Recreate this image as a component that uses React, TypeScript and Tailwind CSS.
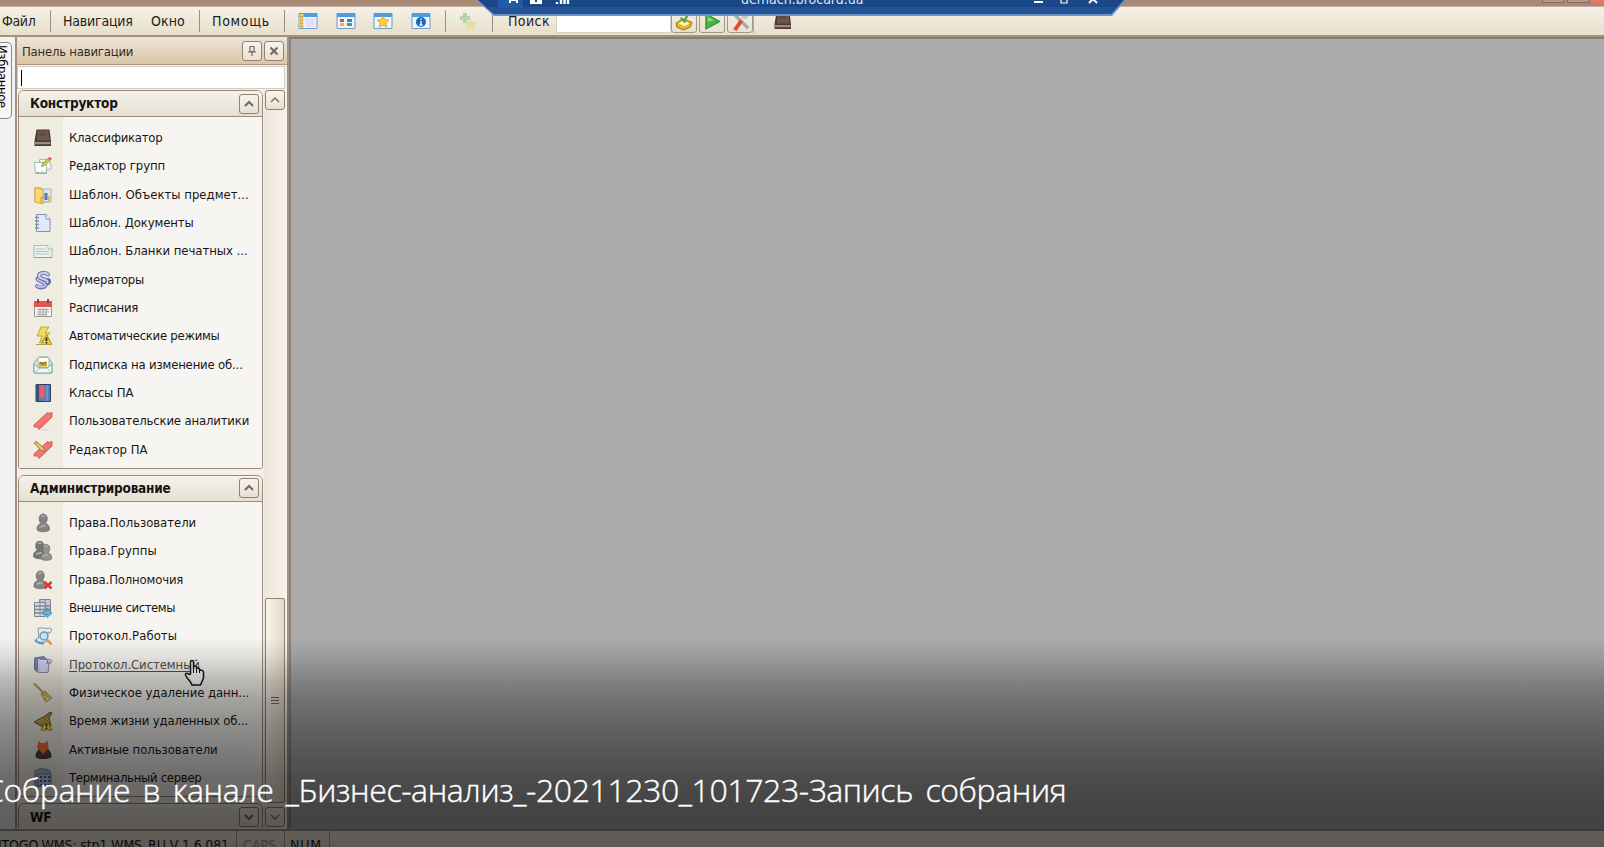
import type { ReactNode } from "react";

const Svg = ({ children, size = 20 }: { children: ReactNode; size?: number }) => (
  <svg width={size} height={size} viewBox="0 0 20 20" fill="none" className="block shrink-0">
    {children}
  </svg>
);

const BookIcon = () => (
  <Svg>
    <path d="M3.500 1.500h13l1.500 12v4.500H1.500v-5z" fill="#4f3a32" />
    <path d="M5 2.500h10.500l1 10H3.800z" fill="#6c574d" />
    <path d="M2 14h15.500v2.200H2z" fill="#9b8c80" />
    <path d="M6.500 5h7M6.300 7h7.500" stroke="#594238" />
  </Svg>
);
const GroupEditIcon = () => (
  <Svg>
    <path d="M6.500 3.500h10l2 9-4 1.500h-8z" fill="#eff6f0" stroke="#a3bfb4" />
    <path d="M1.500 6.500h11l1 3v8h-11z" fill="#f8fcfa" stroke="#9db9b2" />
    <path d="m3 17.500 2-1.500 2 1.500 2-1.500 2 1.500 2-1.500" stroke="#7ea49a" />
    <path d="m8.500 10.500 1-3 6-5.500 2 2-6 5.500z" fill="#d8c84c" stroke="#83833d" strokeWidth=".7" />
    <path d="m15 2.500 1.500-1.500 2.500 1.500-2 2z" fill="#dc5050" />
  </Svg>
);
const FolderIcon = () => (
  <Svg>
    <path d="M2 3h6l2 2h6v12H2z" fill="#e9b94d" stroke="#bc8c2e" strokeWidth=".7" />
    <path d="M10 4h8v13h-8z" fill="#d8e9f5" stroke="#82a2b9" strokeWidth=".7" />
    <path d="M11.500 8h3v7h-3z" fill="#397cc2" />
    <path d="M15 11h2v5h-2z" fill="#d6bf47" />
    <path d="m2 2.500 8 2v14.500l-8-2z" fill="#fbd876" stroke="#c8983b" strokeWidth=".7" />
    <path d="M8 18.500v-6l5-1" stroke="#c8983b" />
  </Svg>
);
const NotebookIcon = () => (
  <Svg>
    <path d="M3.500 1.500H13l4 4.500v12.500H3.500z" fill="#dfe9fa" stroke="#7e91b1" />
    <path d="M13 1.500V6h4" fill="#fff" stroke="#7e91b1" />
    <path d="M2 4.500h4M2 8h4M2 11.500h4M2 15h4" stroke="#8491a8" strokeWidth="1.400" />
  </Svg>
);
const BlankIcon = () => (
  <Svg>
    <path d="M1 4.500h14l4 3v9H1z" fill="#e9f2ed" stroke="#a6bdb5" />
    <path d="M15 4v4h4" fill="#fff" stroke="#a6bdb5" />
    <path d="M3 8h9M3 10.500h13M3 13h13" stroke="#a5c5c9" />
    <path d="M1 16.500h18" stroke="#8ba59c" />
  </Svg>
);
const NumeratorIcon = () => (
  <Svg>
    <path d="M15 4.500c-2-2.500-9-2-9 1.500s8.500 2.500 8.500 6c0 1-1 1.500-2 1.500" stroke="#626aa8" strokeWidth="4" strokeLinecap="round" />
    <path d="M15.500 10c1.500 2 0 3-1 3.500M4.500 8.500C4 11.500 12 11 12.500 15c-.5 3-6 3-8.500 1" stroke="#626aa8" strokeWidth="4" strokeLinecap="round" />
    <path d="M15 4.500c-2-2.500-9-2-9 1.500s8.500 2.500 8.500 6" stroke="#cdd1f2" strokeWidth="2.200" strokeLinecap="round" />
    <path d="M4.500 9c0 2.500 8 2.500 8 6-.5 2.500-6 2.500-8.500 1" stroke="#b9beea" strokeWidth="2.200" strokeLinecap="round" />
  </Svg>
);
const CalendarIcon = () => (
  <Svg>
    <path d="M1.500 3.500h17v15h-17z" fill="#f5f5f2" stroke="#999" />
    <path d="M1 3h18v6H1z" fill="#e65450" />
    <path d="M5 1v4M15 1v4" stroke="#8c3030" strokeWidth="1.800" />
    <path d="M4 11.500h12M4 14h12M4 16.500h10M7 10v8M10 10v8M13 10v8" stroke="#a5aaa4" />
  </Svg>
);
const LightningIcon = () => (
  <Svg>
    <path d="M8 1h8l-4 6h5L6.500 17l2.500-7H4z" fill="#eddb62" stroke="#b9a73b" />
    <path d="M13.500 8.500 19 18.500H8z" fill="#e4cb34" stroke="#a48f24" />
    <path d="M3 18.500h16" stroke="#b3a14a" />
    <path d="M13.500 11.500v3.500M13.500 16v1.500" stroke="#252315" strokeWidth="1.600" />
  </Svg>
);
const MailIcon = () => (
  <Svg>
    <path d="m1 8 5-6h9l4 6v10H1z" fill="#d5e9e9" stroke="#83a6a6" />
    <path d="M5 2.500h11v10H5z" fill="#f9fcf9" stroke="#a1b7ae" />
    <path d="M6 7h8v4.500H6z" fill="#c3a92c" />
    <path d="m7 7 3 2 3-2" stroke="#665c28" />
    <path d="m1 9 5 4h8l5-4v9H1z" fill="#eff8f6" stroke="#83a6a6" />
    <path d="m1 18 6-5M19 18l-6-5" stroke="#a8c3c0" />
  </Svg>
);
const ClassesIcon = () => (
  <Svg>
    <path d="M3 1.500h14.500v17H3z" fill="#507fbd" stroke="#273f6a" />
    <path d="M3 1.500h3v17H3z" fill="#364f7d" />
    <path d="M6.500 2h5v14L9 14l-2.500 2z" fill="#ef5d60" />
    <path d="M14 2v16" stroke="#87aedb" />
  </Svg>
);
const RibbonShape = () => (
  <path d="m14.500 1.500 1.500 1 3-1v4.500L6 18.500l-1.500-2.500-3.500 0v-2z" fill="#f27473" stroke="#c04c4b" strokeWidth=".8" />
);
const RibbonIcon = () => (
  <Svg>
    <RibbonShape />
    <path d="M8 19h8" stroke="#d9d4cb" />
  </Svg>
);
const RibbonEditIcon = () => (
  <Svg>
    <RibbonShape />
    <path d="m1 3 2-2 8 7 .5 3.500-3.500-1z" fill="#e6c457" stroke="#8c7139" strokeWidth=".8" />
    <path d="m1 3 2-2 2 2-2 2z" fill="#d7a08b" />
  </Svg>
);
const Person = ({ fill = "#858483" }: { fill?: string }) => (
  <>
    <path d="M6.200 5.500c0-6 8-6 8 0 0 2-.8 3.500-1.700 4.500.5 1 3.800 1.600 3.800 5v2c-2 2.300-10 2.300-12.200 0v-2c0-3.200 3-3.800 3.600-5-.9-1-1.500-2.500-1.500-4.500z" fill={fill} stroke="#636261" strokeWidth=".7" />
    <path d="M8.500 3.800c1-1.300 2.500-1.300 3.500 0M6.500 14.500c2-1.500 4-2 6-1.500" stroke="#b4b3b1" strokeWidth="1.400" />
  </>
);
const UserIcon = () => (
  <Svg>
    <Person />
  </Svg>
);
const GroupIcon = () => (
  <Svg>
    <g transform="translate(-3.500 -1)">
      <Person fill="#767574" />
    </g>
    <g transform="translate(4 2.500) scale(.9)">
      <Person fill="#92918f" />
    </g>
  </Svg>
);
const UserDenyIcon = () => (
  <Svg>
    <g transform="translate(-3 0)">
      <Person />
    </g>
    <path d="m11.500 12 7 6.500m0-6.500-7 6.500" stroke="#d63d30" strokeWidth="2.600" />
  </Svg>
);
const ServerGridIcon = () => (
  <Svg>
    <path d="M6.500 1.500h11v15h-11z" fill="#c1c5cf" stroke="#7f8490" />
    <path d="M1.500 4.500h11v14h-11z" fill="#d8dbe2" stroke="#7f8490" />
    <path d="M2 8h15M2 11.500h15M2 15h11" stroke="#7b8496" strokeWidth="1.300" />
    <path d="M7 2v16M12 2v16" stroke="#8791a4" />
    <path d="M10 13h4v-3l5 5-5 4.500v-3h-4z" fill="#68b2e9" stroke="#347ab0" strokeWidth=".7" />
  </Svg>
);
const LogSearchIcon = () => (
  <Svg>
    <path d="M5 2.500c3-2 8 1 12-.5 2 1 2 3 0 5l-2-1-1 9c-3 3-8 0-12 1l2-4h2z" fill="#e7eaee" stroke="#8b929b" />
    <circle cx="11" cy="10" r="4" fill="#c0e2f7" stroke="#6791b2" strokeWidth="1.300" />
    <path d="m14 13.500 4.500 5" stroke="#d59b47" strokeWidth="2.400" />
    <path d="m2 14 4 3 5 .5" stroke="#549dcc" strokeWidth="2" />
  </Svg>
);
const SystemLogIcon = () => (
  <Svg>
    <path d="M1.500 3 11 1.500l3 3v13H5l-3.500-3z" fill="#7c80b6" stroke="#6a6ea3" />
    <path d="M6 4.500h8c2-.5 4 0 5 2L16 9l-1 8.500H6.500z" fill="#d2d4ef" stroke="#8488ad" />
    <path d="M14 4.500c1 1 1 2.500-.5 3.500h4" stroke="#686b91" />
    <path d="M6 4v13.500" stroke="#dddff2" strokeWidth="1.500" />
  </Svg>
);
const BroomIcon = () => (
  <Svg>
    <path d="m1.500 1 9 9" stroke="#b39b6a" strokeWidth="2.200" strokeLinecap="round" />
    <path d="m8 11 4-3 7 7-6 4z" fill="#ead684" stroke="#a98f4a" />
    <path d="m9 10 3 3m-1-4 5 6m-3-1-2 3" stroke="#9a7540" />
  </Svg>
);
const LifetimeIcon = () => (
  <Svg>
    <path d="m12 5 5-4 2 1-3 5 2 8-5 3L1 11z" fill="#b28d43" stroke="#76592c" />
    <path d="m12 6 4 4M3 11l7-3m-4 5 6-4" stroke="#dfbe6f" />
    <path d="M13.500 9 19 19H8z" fill="#ffe53a" stroke="#a28c1f" />
    <path d="M13.500 12v3.500M13.500 16.500V18" stroke="#242112" strokeWidth="1.600" />
  </Svg>
);
const ActiveUserIcon = () => (
  <Svg>
    <path d="m6 2 2 2h4l2-2v5l1 3c2 1 3 4 3 7-4 2-12 2-15 0 0-3 1-6 3-7l-1-3z" fill="#514340" stroke="#37302d" />
    <path d="m5 1 3 2h4l3-2 .5 8-5.500 5-5-5z" fill="#ff6a30" />
    <path d="m8 8 2 4 2-4z" fill="#d79929" />
  </Svg>
);
const TerminalIcon = () => (
  <Svg>
    <path d="M2 3c4-3 11-3 15 0v14c-4 2-11 2-15 0z" fill="#a9b4c2" stroke="#6e7f95" />
    <path d="M5 6h13v12H5z" fill="#b9cdea" stroke="#607e9f" />
    <path d="M7 8h2v2H7zM11 8h2v2h-2zM15 8h2v2h-2zM7 12h2v2H7zM11 12h2v2h-2zM15 12h2v2h-2zM7 16h2v1H7zM11 16h2v1h-2zM15 16h2v1h-2z" fill="#315d91" />
  </Svg>
);

type Item = { label: string; icon: ReactNode; hover?: boolean; tracking: string };

const designer: Item[] = [
  { label: "Классификатор", icon: <BookIcon />, tracking: "tracking-[-0.25px]" },
  { label: "Редактор групп", icon: <GroupEditIcon />, tracking: "tracking-[-0.1px]" },
  { label: "Шаблон. Объекты предмет...", icon: <FolderIcon />, tracking: "tracking-[0px]" },
  { label: "Шаблон. Документы", icon: <NotebookIcon />, tracking: "tracking-[-0.12px]" },
  { label: "Шаблон. Бланки печатных ...", icon: <BlankIcon />, tracking: "tracking-[-0.04px]" },
  { label: "Нумераторы", icon: <NumeratorIcon />, tracking: "tracking-[-0.18px]" },
  { label: "Расписания", icon: <CalendarIcon />, tracking: "tracking-[-0.27px]" },
  { label: "Автоматические режимы", icon: <LightningIcon />, tracking: "tracking-[-0.27px]" },
  { label: "Подписка на изменение об...", icon: <MailIcon />, tracking: "tracking-[-0.18px]" },
  { label: "Классы ПА", icon: <ClassesIcon />, tracking: "tracking-[-0.14px]" },
  { label: "Пользовательские аналитики", icon: <RibbonIcon />, tracking: "tracking-[-0.16px]" },
  { label: "Редактор ПА", icon: <RibbonEditIcon />, tracking: "tracking-[0px]" },
];

const admin: Item[] = [
  { label: "Права.Пользователи", icon: <UserIcon />, tracking: "tracking-[-0.05px]" },
  { label: "Права.Группы", icon: <GroupIcon />, tracking: "tracking-[0.04px]" },
  { label: "Права.Полномочия", icon: <UserDenyIcon />, tracking: "tracking-[-0.17px]" },
  { label: "Внешние системы", icon: <ServerGridIcon />, tracking: "tracking-[-0.41px]" },
  { label: "Протокол.Работы", icon: <LogSearchIcon />, tracking: "tracking-[0.04px]" },
  { label: "Протокол.Системный", icon: <SystemLogIcon />, hover: true, tracking: "tracking-[-0.08px]" },
  { label: "Физическое удаление данн...", icon: <BroomIcon />, tracking: "tracking-[-0.06px]" },
  { label: "Время жизни удаленных об...", icon: <LifetimeIcon />, tracking: "tracking-[-0.15px]" },
  { label: "Активные пользователи", icon: <ActiveUserIcon />, tracking: "tracking-[-0.06px]" },
  { label: "Терминальный сервер", icon: <TerminalIcon />, tracking: "tracking-[-0.3px]" },
];

const Chevron = ({ down = false, thin = false }: { down?: boolean; thin?: boolean }) => (
  <svg width="12" height="8" viewBox="0 0 12 8" fill="none">
    <path d={down ? "m2 2 4 4 4-4" : "m2 6 4-4 4 4"} stroke="#76695f" strokeWidth={thin ? 1.3 : 2} />
  </svg>
);

const Button = ({ children }: { children: ReactNode }) => (
  <div className="flex size-5 shrink-0 items-center justify-center rounded-[3px] border border-[#947f70] bg-linear-to-b from-[#f8f5ee] to-[#e8e0d1]">
    {children}
  </div>
);

const GroupHeader = ({ title, down }: { title: string; down?: boolean }) => (
  <div className="flex h-[26px] shrink-0 items-center justify-between border-b border-[#9d8a7c] bg-linear-to-b from-[#f5f2ec] to-[#e6dfd2] pr-[3px] pl-[11px]">
    <span className="text-[13.5px] font-bold tracking-[-0.2px] text-[#171412]">{title}</span>
    <Button>
      <Chevron down={down} />
    </Button>
  </div>
);

const Group = ({ title, items }: { title: string; items: Item[] }) => (
  <section className="shrink-0 overflow-hidden rounded-t-[6px] rounded-b-[3px] border-[1.5px] border-[#9d8a7c] bg-[#f6f4f0]">
    <GroupHeader title={title} />
    <ul className="bg-linear-to-r from-[#efece1] from-[44px] to-[#f7f5f1] to-[44px] pt-[7px] pb-[4px]">
      {items.map((item) => (
        <li key={item.label} className="flex h-[28.33px] items-center gap-[16px] pl-[14px]">
          {item.icon}
          <span
            className={`text-[13px] leading-4 whitespace-nowrap ${item.tracking} ${item.hover ? "text-[#57524e] underline underline-offset-2" : "text-[#191715]"}`}
          >
            {item.label}
          </span>
        </li>
      ))}
    </ul>
  </section>
);

const WindowIcon = ({ kind }: { kind: "list" | "apps" | "star" | "info" }) => (
  <Svg>
    <path d="M1 2.500h18v15H1z" fill="#eef5fd" stroke="#6f9bc9" />
    <path d="M1 2h18v4H1z" fill="#4b9fe0" />
    {kind === "list" && (
      <>
        <path d="M1.500 3h4v14h-4z" fill="#f2cf73" />
        <path d="M2 6h3M2 9h3M2 12h3M2 15h3" stroke="#bc8f31" />
        <path d="M7 7h10v9H7z" fill="#e0e1f6" />
      </>
    )}
    {kind === "apps" && (
      <>
        <path d="M4 8h4v3H4z" fill="#db493e" />
        <path d="M11 8h5v3h-5z" fill="#3781cf" />
        <path d="M4 12h4v3H4z" fill="#edb53b" />
        <path d="M11 12h5v3h-5z" fill="#4da156" />
      </>
    )}
    {kind === "star" && (
      <path d="m10 5 1.800 3.500 4 .7-3 2.800.8 4-3.600-1.900L6.400 16l.8-4-3-2.800 4-.7z" fill="#ffcf42" stroke="#d49a29" strokeWidth=".8" />
    )}
    {kind === "info" && (
      <>
        <circle cx="10" cy="11" r="5" fill="#1867bd" />
        <path d="M10 7.500v1.500M10 10v4M8.500 14h3" stroke="#fff" strokeWidth="1.400" />
      </>
    )}
  </Svg>
);

const Divider = () => <div className="h-[22px] w-px shrink-0 bg-[#988f84]" />;

const ToolButton = ({ children }: { children: ReactNode }) => (
  <div className="flex h-[24px] w-[26px] shrink-0 items-end justify-center rounded-[3px] border border-[#a3978b] bg-linear-to-b from-[#f4f0e7] to-[#e9e1d0] pb-px">
    {children}
  </div>
);

const Toolbar = () => (
  <header className="flex h-[28px] shrink-0 items-center bg-linear-to-b from-[#f5f1e8] to-[#e7dfca] text-[14px] text-[#211d1a]">
    <span className="w-[50px] pl-[2px] tracking-[-0.35px]">Файл</span>
    <Divider />
    <span className="w-[87px] pl-[12px] tracking-[-0.2px]">Навигация</span>
    <span className="w-[57px] pl-[13px] tracking-[0.1px]">Окно</span>
    <div className="w-[4px]" />
    <Divider />
    <span className="w-[84px] pl-[12px] tracking-[0.7px]">Помощь</span>
    <Divider />
    <div className="flex w-[160px] gap-[17.5px] pl-[13px]">
      <WindowIcon kind="list" />
      <WindowIcon kind="apps" />
      <WindowIcon kind="star" />
      <WindowIcon kind="info" />
    </div>
    <Divider />
    <div className="w-[46px] pl-[12px]">
      <Svg>
        <path d="M5 2h4v3h3v4H9v3H5V9H2V5h3z" fill="#b6d3a8" />
        <path d="m13 8 2 3 4 1-3 3 1 4-4-2-4 2 1-4-3-3 4-1z" fill="#e9df9c" />
      </Svg>
    </div>
    <Divider />
    <span className="w-[63px] pl-[15px] tracking-[0.4px]">Поиск</span>
    <div className="h-[24px] w-[115px] border border-[#d9d2c6] bg-white" />
    <div className="flex gap-[2px] border-r border-[#b6ada0]">
      <ToolButton>
        <Svg size={19}>
          <path d="m1 12 7-5 10 4-2 5-7 3-7-3z" fill="#e4b928" stroke="#8c751d" />
          <path d="m4 12 5-3 6 3-5 3z" fill="#fff6b7" />
          <path d="m14 1-4 9-4-4" stroke="#54a443" strokeWidth="2.400" />
        </Svg>
      </ToolButton>
      <ToolButton>
        <Svg size={19}>
          <path d="m3 2 15 8-15 8z" fill="#46b63e" stroke="#277f26" />
          <path d="m5 5 7 4-7 1z" fill="#8ad77e" />
        </Svg>
      </ToolButton>
      <ToolButton>
        <Svg size={19}>
          <path d="m3 2 13 13m-2-2 4 4" stroke="#a8a9aa" strokeWidth="3.500" />
          <path d="m13 2 5-1v5l-4 2-3-3z" fill="#c5c6c8" />
          <path d="m11 9-7 10" stroke="#e34b32" strokeWidth="4" />
        </Svg>
      </ToolButton>
    </div>
    <div className="pl-[19px]">
      <BookIcon />
    </div>
  </header>
);

const RemoteBar = () => (
  <div className="absolute top-0 left-[476px] h-[16px] w-[650px]">
    <svg width="650" height="16" viewBox="0 0 650 16" className="block">
      <path d="M0 0h650l-14 16H18z" fill="#6b96c7" />
      <path d="M2 0h646l-13 14H18z" fill="#1a4787" />
      <path d="M10 7h631l-6 7H18z" fill="#235295" />
      <path d="M22 0h25v8H22z" fill="#215ba6" />
      <path d="M34 0v3M41 0v3M35 0h5" stroke="#fff" strokeWidth="2" />
      <path d="M54 0h12v4H54z" fill="#fff" />
      <path d="M60 0v2" stroke="#1a4787" strokeWidth="2" />
      <path d="M81 4V2M85 4V0M88.500 4V0M92 4V0" stroke="#fff" strokeWidth="2.400" />
      <path d="M558 2h9" stroke="#fff" strokeWidth="2" />
      <path d="M585 0v3h6V0" stroke="#fff" strokeWidth="1.200" fill="none" />
      <path d="m613 3 4-4 4 4" stroke="#fff" strokeWidth="2" fill="none" />
    </svg>
    <div className="absolute top-[-9px] left-[265px] text-[14px] leading-4 whitespace-nowrap text-[#d9e4f3]">demach.brocard.ua</div>
  </div>
);

const HandCursor = () => (
  <svg width="22" height="28" viewBox="0 0 22 28" className="absolute top-[659px] left-[184px]">
    <path
      d="M6.500 15V3c0-2 3-2 3 0v7-2c0-1.500 3-1.500 3 0v2c0-1.500 3-1.500 3 0v2c0-1.500 4-1 4 1v6l-3 7H8c-1-4-5-6-6.500-10-.5-2 2-2.500 3.500-.5z"
      fill="#fff"
      stroke="#171717"
      strokeWidth="1.500"
    />
    <path d="M9.500 10v4M12.500 10v4M15.500 11v3" stroke="#171717" />
  </svg>
);

export default function App() {
  return (
    <div className="relative flex h-[847px] w-[1604px] flex-col overflow-hidden bg-[#ababab] font-['DejaVu_Sans_Condensed','DejaVu_Sans',sans-serif]">
      <div className="flex h-[7px] shrink-0 items-start justify-end gap-[3px] border-b border-[#c9aea0] bg-[#a98a76]">
        <div className="h-[3px] w-[22px] border-x border-b border-[#86695b] bg-[#b59b8a]" />
        <div className="h-[3px] w-[22px] border-x border-b border-[#86695b] bg-[#b59b8a]" />
        <div className="h-[3px] w-[12px] bg-[#ec7568]" />
      </div>
      <Toolbar />
      <div className="h-[2px] shrink-0 bg-[#a4917e]" />
      <div className="flex h-[792px] shrink-0">
        <div className="h-full w-[15px] shrink-0 bg-[#f2f2f2] pt-[5px]">
          <div className="h-[77px] w-[12px] overflow-hidden rounded-r-[5px] border border-l-0 border-[#8e8881] bg-[#f7f6f4]">
            <div className="-ml-[5px] w-[14px] pt-[2px] text-[13px] leading-[14px] tracking-[-0.4px] [writing-mode:vertical-rl]">Избранное</div>
          </div>
        </div>
        <aside className="flex w-[274px] shrink-0 flex-col border-x-2 border-[#a49182] bg-[#f4efe7]">
          <div className="flex h-[28px] shrink-0 items-center border-b border-[#aa9785] bg-linear-to-b from-[#ece5da] to-[#d9c6a6] pr-[3px] pl-[5px]">
            <span className="flex-1 pt-[2px] text-[13px] tracking-[-0.22px] text-[#352c25]">Панель навигации</span>
            <div className="flex gap-[2px]">
              <Button>
                <svg width="12" height="12" viewBox="0 0 12 12" fill="none">
                  <path d="M4 1.500h4v5H4zM2 7h8M6 7v4" stroke="#74675e" strokeWidth="1.200" />
                </svg>
              </Button>
              <Button>
                <svg width="10" height="10" viewBox="0 0 10 10">
                  <path d="m1.500 1.500 7 7m0-7-7 7" stroke="#74675e" strokeWidth="2" />
                </svg>
              </Button>
            </div>
          </div>
          <div className="mt-[1px] mr-[2px] flex h-[23px] shrink-0 items-center border border-[#d5cbc0] bg-white pl-[3px]">
            <div className="h-4 w-px bg-black" />
          </div>
          <div className="flex min-h-0 flex-1 pt-px">
            <div className="flex w-[247px] shrink-0 flex-col gap-[6px] overflow-hidden bg-[#f5efea] pr-[1px] pl-[1px]">
              <Group title="Конструктор" items={designer} />
              <Group title="Администрирование" items={admin} />
              <div className="h-[25px] shrink-0 overflow-hidden rounded-t-[6px] border border-b-0 border-[#9d8a7c]">
                <GroupHeader title="WF" down />
              </div>
            </div>
            <div className="flex w-[23px] flex-col bg-linear-to-r from-[#ece5da] to-[#faf3ec] pb-[2px] pl-[1px]">
              <Button>
                <Chevron thin />
              </Button>
              <div className="flex-1" />
              <div className="mb-[4px] flex h-[205px] w-5 items-center justify-center rounded-[2px] border border-[#947f70] bg-linear-to-r from-[#f8f3eb] to-[#e6dbc9]">
                <div className="flex flex-col gap-[2px]">
                  <div className="h-px w-2 bg-[#76695f]" />
                  <div className="h-px w-2 bg-[#76695f]" />
                  <div className="h-px w-2 bg-[#76695f]" />
                </div>
              </div>
              <Button>
                <Chevron down thin />
              </Button>
            </div>
          </div>
        </aside>
        <main className="flex-1 border-t-2 border-l-2 border-t-[#877c79] border-l-[#858585] bg-[#ababab]" />
      </div>
      <footer className="flex h-[18px] shrink-0 border-t-2 border-[#a29588] bg-linear-to-b from-[#f8f0e5] to-[#f0e4d8] text-[14px] leading-[28px] whitespace-nowrap text-[#201d1a]">
        <div className="w-[237px] border-r border-[#afa296]">
          <span className="-ml-[2px] tracking-[-0.15px]">ITOGO.WMS: stp1.WMS_RU V 1.6.081</span>
        </div>
        <div className="w-[48px] border-r border-[#afa296] pl-[6px] tracking-[0.1px] text-[#a39a91]">CAPS</div>
        <div className="w-[45px] border-r border-[#afa296] pl-[5px] tracking-[0.8px]">NUM</div>
      </footer>
      <RemoteBar />
      <HandCursor />
      <div className="absolute inset-x-0 top-[638px] h-[209px] bg-[linear-gradient(to_bottom,rgba(0,0,0,0)_0%,rgba(0,0,0,0.09)_9%,rgba(0,0,0,0.24)_20%,rgba(0,0,0,0.34)_30%,rgba(0,0,0,0.42)_41%,rgba(0,0,0,0.49)_54%,rgba(0,0,0,0.56)_67%,rgba(0,0,0,0.605)_82%,rgba(0,0,0,0.61)_100%)]" />
      <div className="absolute top-[770px] left-[-16px] font-['Open_Sans','Noto_Sans',sans-serif] text-[32px] leading-[40px] font-light tracking-[-0.4px] whitespace-nowrap text-white [word-spacing:4.5px] [-webkit-text-stroke:0.4px_white]">
        Собрание в канале _Бизнес-анализ_-20211230_101723-Запись собрания
      </div>
    </div>
  );
}
